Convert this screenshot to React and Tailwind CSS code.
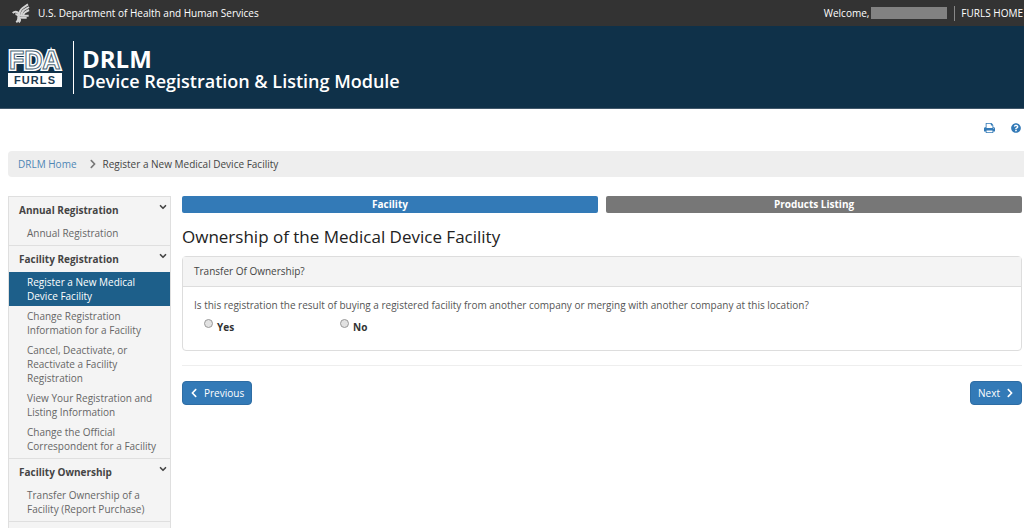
import React from 'react';
import { ChevronDown } from 'lucide-react';
import { FaQuestionCircle, FaChevronLeft, FaChevronRight } from 'react-icons/fa';

const menu = [
  {
    title: 'Annual Registration',
    items: ['Annual Registration']
  },
  {
    title: 'Facility Registration',
    items: [
      'Register a New Medical Device Facility',
      'Change Registration Information for a Facility',
      'Cancel, Deactivate, or Reactivate a Facility Registration',
      'View Your Registration and Listing Information',
      'Change the Official Correspondent for a Facility'
    ]
  },
  {
    title: 'Facility Ownership',
    items: ['Transfer Ownership of a Facility (Report Purchase)']
  }
];

const activeItem = 'Register a New Medical Device Facility';

const EagleLogo = () => (
  <svg viewBox="0 0 54 60" className="w-[18px] h-5 shrink-0" fill="none" stroke="#d4d4d4" strokeWidth="6" aria-hidden="true">
    <path d="M48 4 L32 15 Q21 23 23 36" />
    <path d="M51 12 L36 21 Q28 27 29 36" />
    <path d="M51 21 L40 27 Q34 31 34 37" />
    <path d="M2 30 Q10 23 18 29 Q20 39 31 38 L50 38" />
    <path d="M10 34 Q15 32 18 38 Q22 45 32 44 L44 44" />
    <path d="M18 42 Q21 50 13 58 M22 45 Q27 52 20 58" />
  </svg>
);

const PrintIcon = () => (
  <svg viewBox="0 0 1664 1792" className="w-[11px] h-3" fill="currentColor" aria-hidden="true">
    <path d="M384 1536h896v-256h-896v256zM384 896h896v-384h-160q-40 0-68-28t-28-68v-160h-640v640zM1536 960q0-26-19-45t-45-19-45 19-19 45 19 45 45 19 45-19 19-45zM1664 960v416q0 13-9.5 22.5t-22.5 9.5h-224v160q0 40-28 68t-68 28h-960q-40 0-68-28t-28-68v-160h-224q-13 0-22.5-9.5t-9.5-22.5v-416q0-79 56.5-135.5t135.5-56.5h64v-544q0-40 28-68t68-28h672q40 0 88 20t76 48l152 152q28 28 48 76t20 88v256h64q79 0 135.5 56.5t56.5 135.5z" />
  </svg>
);

const FdaLogo = () => (
  <div className="w-[54px]">
    <svg viewBox="0 0 54 24" className="w-full h-6 block overflow-visible font-['Liberation_Sans',sans-serif]" fontSize="25" fontWeight="700" role="img" aria-label="FDA">
      {/* white outer band, then a thin dark line inside it */}
      <text x="1" y="21" fill="#fff" stroke="#fff" strokeWidth="4">FDA</text>
      <text x="1" y="21" fill="#fff" stroke="#4d6879" strokeWidth="1" aria-hidden="true">FDA</text>
    </svg>
    <div className="mt-px h-3.5 bg-white text-center text-[11px] leading-3.5 font-bold text-[#1d3a50] tracking-widest font-['Liberation_Sans',sans-serif]">
      FURLS
    </div>
  </div>
);

const Sidebar = () => (
  <nav className="w-[163px] shrink-0 border border-b-0 border-[#dfdfdf] bg-[#f4f4f4]">
    {menu.map((group) => (
      <section key={group.title} className="border-b border-[#dfdfdf] pb-0.5">
        <button type="button" className="flex w-full justify-between pl-2.5 pr-0.5 py-[5px] text-left font-bold leading-4 text-[#444]">
          {group.title}
          <ChevronDown className="size-2.5" strokeWidth={4} />
        </button>
        <ul>
          {group.items.map((item) => (
            <li key={item}>
              <a
                href="#"
                className={
                  item === activeItem
                    ? 'block bg-[#1d5f8a] pl-[18px] pr-3 py-[3px] leading-3.5 text-white'
                    : 'block pl-[18px] pr-3 py-[3px] leading-3.5 text-[#666]'
                }
              >
                {item}
              </a>
            </li>
          ))}
        </ul>
      </section>
    ))}
  </nav>
);

const OwnershipPanel = () => (
  <fieldset className="rounded-sm border border-[#ddd]">
    <div className="border-b border-[#ddd] bg-[#f4f4f4] px-[11px] py-1.5 leading-[17px] text-[#444]">
      Transfer Of Ownership?
    </div>
    <div className="px-[11px] pt-2.5 pb-[15px]">
      <p id="ownership-question" className="leading-4 text-[#555]">
        Is this registration the result of buying a registered facility from another company or merging with another company at this location?
      </p>
      <div role="radiogroup" aria-labelledby="ownership-question" className="mt-0.5 flex px-2.5 font-bold leading-4 text-[#333]">
        {['Yes', 'No'].map((answer) => (
          <label key={answer} className="flex w-[136px] gap-1 pt-1">
            <input
              type="radio"
              name="ownership"
              value={answer}
              className="size-[9px] appearance-none rounded-full border border-[#999] bg-[#e2e2e2] checked:bg-[#337ab7]"
            />
            {answer}
          </label>
        ))}
      </div>
    </div>
  </fieldset>
);

const App = () => {
  return (
    <div className="flex min-h-screen flex-col bg-white text-[10px] font-['Open_Sans',sans-serif]">
      <div className="flex h-[26px] items-center justify-between bg-[#333] pl-3 pr-px text-white">
        <div className="flex items-center gap-2">
          <EagleLogo />
          <span>U.S. Department of Health and Human Services</span>
        </div>
        <div className="flex items-center">
          <span>Welcome,</span>
          <span className="ml-0.5 h-3 w-[76px] bg-[#828282]" />
          <a href="#" className="ml-[7px] border-l border-[#888] pl-1.5">FURLS HOME</a>
        </div>
      </div>

      <header className="flex h-[83px] items-center border-b border-[#40576a] bg-[#0f3149] pl-2 text-white">
        <FdaLogo />
        <div className="ml-[11px] flex h-[53px] flex-col justify-center border-l border-white pl-2 pt-1">
          <h1 className="text-[24px] leading-6 font-bold">DRLM</h1>
          <p className="text-[18px] leading-5 font-semibold">Device Registration &amp; Listing Module</p>
        </div>
      </header>

      <div className="flex h-[42px] items-center justify-end gap-4 pr-[3px] pb-1 text-[#337ab7]">
        <button type="button" aria-label="Print"><PrintIcon /></button>
        <button type="button" aria-label="Help"><FaQuestionCircle className="size-2.5" /></button>
      </div>

      <nav aria-label="Breadcrumb" className="ml-2 flex h-[26px] items-center rounded-l-sm bg-[#eee] pl-2.5">
        <a href="#" className="text-[#4f86b5]">DRLM Home</a>
        <FaChevronRight className="ml-3 mr-1.5 h-2.5 w-2 text-[#777]" />
        <span className="text-[#444]">Register a New Medical Device Facility</span>
      </nav>

      <div className="mt-[19px] flex flex-1 gap-[11px] pl-2 pr-0.5">
        <Sidebar />

        <main className="min-w-0 flex-1">
          <div className="grid grid-cols-2 gap-2 text-center font-bold leading-[17px] text-white">
            <div className="rounded-xs bg-[#337ab7]">Facility</div>
            <div className="rounded-xs bg-[#777]">Products Listing</div>
          </div>
          <h2 className="mt-3 mb-[7px] text-[17px] leading-6 text-[#222]">Ownership of the Medical Device Facility</h2>
          <OwnershipPanel />
          <hr className="mt-3.5 mb-[15px] border-[#eee]" />
          <div className="flex justify-between text-white">
            <button type="button" className="flex h-6 items-center gap-1.5 rounded-sm border border-[#2e6da4] bg-[#337ab7] px-[7px]">
              <FaChevronLeft className="h-2.5 w-2" />
              Previous
            </button>
            <button type="button" className="flex h-6 items-center gap-1.5 rounded-sm border border-[#2e6da4] bg-[#337ab7] px-[7px]">
              Next
              <FaChevronRight className="h-2.5 w-2" />
            </button>
          </div>
        </main>
      </div>
    </div>
  );
};

export default App;
